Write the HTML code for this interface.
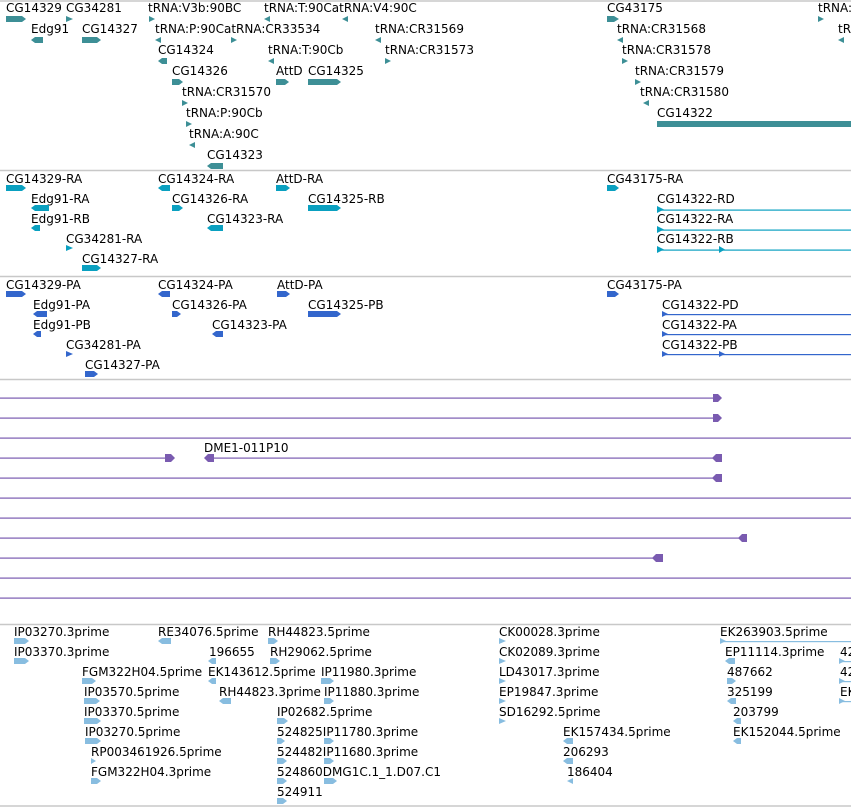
<!DOCTYPE html>
<html><head><meta charset="utf-8"><style>
html,body{margin:0;padding:0;background:#fff;}
svg{display:block;}
text{font-family:"DejaVu Sans","Liberation Sans",sans-serif;font-size:12px;fill:#000;}
.t{fill:#3d8f96}.c{fill:#0aa0c0}.b{fill:#3366cc}.e{fill:#88bde0}.p{fill:#7a5bb0}
</style></head><body>
<svg width="851" height="807" viewBox="0 0 851 807" xmlns="http://www.w3.org/2000/svg">
<g stroke="#c8c8c8" stroke-width="1.5">
<line x1="0" y1="1" x2="851" y2="1"/><line x1="0" y1="170.5" x2="851" y2="170.5"/>
<line x1="0" y1="276.5" x2="851" y2="276.5"/><line x1="0" y1="379.5" x2="851" y2="379.5"/>
<line x1="0" y1="624.5" x2="851" y2="624.5"/><line x1="0" y1="806" x2="851" y2="806"/>
</g>
<g>
<text x="6" y="12">CG14329</text><text x="66" y="12">CG34281</text><text x="148" y="12">tRNA:V3b:90BC</text><text x="264" y="12">tRNA:T:90CatRNA:V4:90C</text><text x="607" y="12">CG43175</text><text x="818" y="12">tRNA:</text>
<text x="31" y="33">Edg91</text><text x="82" y="33">CG14327</text><text x="155" y="33">tRNA:P:90CatRNA:CR33534</text><text x="375" y="33">tRNA:CR31569</text><text x="617" y="33">tRNA:CR31568</text><text x="838" y="33">tR</text>
<text x="158" y="54">CG14324</text><text x="268" y="54">tRNA:T:90Cb</text><text x="385" y="54">tRNA:CR31573</text><text x="622" y="54">tRNA:CR31578</text>
<text x="172" y="75">CG14326</text><text x="276" y="75">AttD</text><text x="308" y="75">CG14325</text><text x="635" y="75">tRNA:CR31579</text>
<text x="182" y="96">tRNA:CR31570</text><text x="640" y="96">tRNA:CR31580</text>
<text x="186" y="117">tRNA:P:90Cb</text><text x="657" y="117">CG14322</text>
<text x="189" y="138">tRNA:A:90C</text>
<text x="207" y="159">CG14323</text>
</g>
<g class="t">
<polygon points="6,16 22,16 26,19 22,22 6,22"/><polygon points="66,16 73,19 66,22"/><polygon points="149,16 155,19 149,22"/><polygon points="270,16 264,19 270,22"/><polygon points="348,16 342,19 348,22"/><polygon points="607,16 614,16 619,19 614,22 607,22"/><polygon points="818,16 824,19 818,22"/>
<polygon points="35,37 43,37 43,43 35,43 31,40"/><polygon points="82,37 97,37 101,40 97,43 82,43"/><polygon points="161,37 155,40 161,43"/><polygon points="231,37 237,40 231,43"/><polygon points="381,37 375,40 381,43"/><polygon points="623,37 617,40 623,43"/><polygon points="844,37 838,40 844,43"/>
<polygon points="162,58 167,58 167,64 162,64 158,61"/><polygon points="274,58 268,61 274,64"/><polygon points="385,58 391,61 385,64"/><polygon points="622,58 628,61 622,64"/>
<polygon points="172,79 179,79 183,82 179,85 172,85"/><polygon points="276,79 285,79 289,82 285,85 276,85"/><polygon points="308,79 337,79 341,82 337,85 308,85"/><polygon points="635,79 641,82 635,85"/>
<polygon points="182,100 188,103 182,106"/><polygon points="649,100 643,103 649,106"/>
<polygon points="186,121 192,124 186,127"/><rect x="657" y="121" width="194" height="6"/>
<polygon points="195,142 189,145 195,148"/>
<polygon points="211,163 223,163 223,169 211,169 207,166"/>
</g>
<g>
<text x="6" y="183">CG14329-RA</text><text x="158" y="183">CG14324-RA</text><text x="276" y="183">AttD-RA</text><text x="607" y="183">CG43175-RA</text>
<text x="31" y="203">Edg91-RA</text><text x="172" y="203">CG14326-RA</text><text x="308" y="203">CG14325-RB</text><text x="657" y="203">CG14322-RD</text>
<text x="31" y="223">Edg91-RB</text><text x="207" y="223">CG14323-RA</text><text x="657" y="223">CG14322-RA</text>
<text x="66" y="243">CG34281-RA</text><text x="657" y="243">CG14322-RB</text>
<text x="82" y="263">CG14327-RA</text>
</g>
<g class="c">
<polygon points="6,185 22,185 26,188 22,191 6,191"/><polygon points="162,185 170,185 170,191 162,191 158,188"/><polygon points="276,185 286,185 290,188 286,191 276,191"/><polygon points="607,185 615,185 619,188 615,191 607,191"/>
<polygon points="35,205 49,205 49,211 35,211 31,208"/><polygon points="172,205 179,205 183,208 179,211 172,211"/><polygon points="308,205 337,205 341,208 337,211 308,211"/>
<rect x="657" y="209.5" width="194" height="1.2"/><polygon points="657,206 664,209.5 657,213"/>
<polygon points="35,225 40,225 40,231 35,231 31,228"/><polygon points="211,225 223,225 223,231 211,231 207,228"/>
<rect x="657" y="229.5" width="194" height="1.2"/><polygon points="657,226 664,229.5 657,233"/>
<polygon points="66,245 73,248 66,251"/>
<rect x="657" y="249.5" width="194" height="1.2"/><polygon points="657,246 664,249.5 657,253"/><polygon points="719,246 725,249.5 719,253"/>
<polygon points="82,265 97,265 101,268 97,271 82,271"/>
</g>
<g>
<text x="6" y="289">CG14329-PA</text><text x="158" y="289">CG14324-PA</text><text x="277" y="289">AttD-PA</text><text x="607" y="289">CG43175-PA</text>
<text x="33" y="309">Edg91-PA</text><text x="172" y="309">CG14326-PA</text><text x="308" y="309">CG14325-PB</text><text x="662" y="309">CG14322-PD</text>
<text x="33" y="329">Edg91-PB</text><text x="212" y="329">CG14323-PA</text><text x="662" y="329">CG14322-PA</text>
<text x="66" y="349">CG34281-PA</text><text x="662" y="349">CG14322-PB</text>
<text x="85" y="369">CG14327-PA</text>
</g>
<g class="b">
<polygon points="6,291 22,291 26,294 22,297 6,297"/><polygon points="162,291 170,291 170,297 162,297 158,294"/><polygon points="277,291 286,291 290,294 286,297 277,297"/><polygon points="607,291 615,291 619,294 615,297 607,297"/>
<polygon points="37,311 47,311 47,317 37,317 33,314"/><polygon points="172,311 177,311 181,314 177,317 172,317"/><polygon points="308,311 337,311 341,314 337,317 308,317"/>
<rect x="662" y="314" width="189" height="1.2"/><polygon points="662,311 668,314 662,317"/>
<polygon points="37,331 41,331 41,337 37,337 33,334"/><polygon points="216,331 223,331 223,337 216,337 212,334"/>
<rect x="662" y="334" width="189" height="1.2"/><polygon points="662,331 668,334 662,337"/>
<polygon points="66,351 73,354 66,357"/>
<rect x="662" y="354" width="189" height="1.2"/><polygon points="662,351 668,354 662,357"/><polygon points="719,351 725,354 719,357"/>
<polygon points="85,371 94,371 98,374 94,377 85,377"/>
</g>
<g class="p">
<rect x="0" y="397.5" width="716" height="1.2"/><polygon points="713,394 718,394 722,398 718,402 713,402"/>
<rect x="0" y="417.5" width="716" height="1.2"/><polygon points="713,414 718,414 722,418 718,422 713,422"/>
<rect x="0" y="437.5" width="851" height="1.2"/>
<rect x="0" y="457.5" width="170" height="1.2"/><polygon points="165,454 171,454 175,458 171,462 165,462"/>
<rect x="206" y="457.5" width="512" height="1.2"/><polygon points="204,458 208,454 214,454 214,462 208,462"/><polygon points="712,458 716,454 722,454 722,462 716,462"/>
<rect x="0" y="477.5" width="718" height="1.2"/><polygon points="712,478 716,474 722,474 722,482 716,482"/>
<rect x="0" y="497.5" width="851" height="1.2"/>
<rect x="0" y="517.5" width="851" height="1.2"/>
<rect x="0" y="537.5" width="742" height="1.2"/><polygon points="738,538 742,534 747,534 747,542 742,542"/>
<rect x="0" y="557.5" width="658" height="1.2"/><polygon points="652,558 656,554 663,554 663,562 656,562"/>
<rect x="0" y="577.5" width="851" height="1.2"/>
<rect x="0" y="597.5" width="851" height="1.2"/>
</g>
<text x="204" y="452">DME1-011P10</text>
<g>
<text x="14" y="636">IP03270.3prime</text><text x="158" y="636">RE34076.5prime</text><text x="268" y="636">RH44823.5prime</text><text x="499" y="636">CK00028.3prime</text><text x="720" y="636">EK263903.5prime</text>
<text x="14" y="656">IP03370.3prime</text><text x="209" y="656">196655</text><text x="270" y="656">RH29062.5prime</text><text x="499" y="656">CK02089.3prime</text><text x="725" y="656">EP11114.3prime</text><text x="840" y="656">42</text>
<text x="82" y="676">FGM322H04.5prime</text><text x="208" y="676">EK143612.5prime</text><text x="321" y="676">IP11980.3prime</text><text x="499" y="676">LD43017.3prime</text><text x="727" y="676">487662</text><text x="840" y="676">42</text>
<text x="84" y="696">IP03570.5prime</text><text x="219" y="696">RH44823.3prime</text><text x="324" y="696">IP11880.3prime</text><text x="499" y="696">EP19847.3prime</text><text x="727" y="696">325199</text><text x="840" y="696">EK</text>
<text x="84" y="716">IP03370.5prime</text><text x="277" y="716">IP02682.5prime</text><text x="499" y="716">SD16292.5prime</text><text x="733" y="716">203799</text>
<text x="85" y="736">IP03270.5prime</text><text x="277" y="736">524825IP11780.3prime</text><text x="563" y="736">EK157434.5prime</text><text x="733" y="736">EK152044.5prime</text>
<text x="91" y="756">RP003461926.5prime</text><text x="277" y="756">524482IP11680.3prime</text><text x="563" y="756">206293</text>
<text x="91" y="776">FGM322H04.3prime</text><text x="277" y="776">524860DMG1C.1_1.D07.C1</text><text x="567" y="776">186404</text>
<text x="277" y="796">524911</text>
</g>
<g class="e">
<polygon points="14,638 25,638 29,641 25,644 14,644"/><polygon points="162,638 171,638 171,644 162,644 158,641"/><polygon points="268,638 274,638 278,641 274,644 268,644"/><polygon points="499,638 506,641 499,644"/>
<rect x="720" y="641" width="131" height="1.2"/><polygon points="720,638 726,641 720,644"/>
<polygon points="14,658 25,658 29,661 25,664 14,664"/><polygon points="212,658 216,658 216,664 212,664 208,661"/><polygon points="270,658 276,658 280,661 276,664 270,664"/><polygon points="499,658 506,661 499,664"/><polygon points="729,658 735,658 735,664 729,664 725,661"/>
<rect x="839" y="661" width="12" height="1.2"/><polygon points="839,658 845,661 839,664"/>
<polygon points="82,678 92,678 96,681 92,684 82,684"/><polygon points="212,678 216,678 216,684 212,684 208,681"/><polygon points="321,678 330,678 334,681 330,684 321,684"/><polygon points="499,678 506,681 499,684"/><polygon points="727,678 732,678 736,681 732,684 727,684"/>
<rect x="839" y="681" width="12" height="1.2"/><polygon points="839,678 845,681 839,684"/>
<polygon points="84,698 96,698 100,701 96,704 84,704"/><polygon points="223,698 231,698 231,704 223,704 219,701"/><polygon points="324,698 330,698 334,701 330,704 324,704"/><polygon points="499,698 506,701 499,704"/><polygon points="731,698 736,698 736,704 731,704 727,701"/>
<rect x="839" y="701" width="12" height="1.2"/><polygon points="839,698 845,701 839,704"/>
<polygon points="84,718 97,718 101,721 97,724 84,724"/><polygon points="277,718 284,718 288,721 284,724 277,724"/><polygon points="499,718 506,721 499,724"/><polygon points="737,718 741,718 741,724 737,724 733,721"/>
<polygon points="85,738 97,738 101,741 97,744 85,744"/><polygon points="277,738 281,738 285,741 281,744 277,744"/><polygon points="324,738 330,738 334,741 330,744 324,744"/><polygon points="567,738 573,738 573,744 567,744 563,741"/><polygon points="737,738 741,738 741,744 737,744 733,741"/>
<polygon points="91,758 96,761 91,764"/><polygon points="277,758 283,758 287,761 283,764 277,764"/><polygon points="324,758 330,758 334,761 330,764 324,764"/><polygon points="567,758 573,758 573,764 567,764 563,761"/>
<polygon points="91,778 97,778 101,781 97,784 91,784"/><polygon points="277,778 283,778 287,781 283,784 277,784"/><polygon points="324,778 333,778 337,781 333,784 324,784"/><polygon points="573,778 567,781 573,784"/>
<polygon points="277,798 283,798 287,801 283,804 277,804"/>
</g>
</svg>
</body></html>
